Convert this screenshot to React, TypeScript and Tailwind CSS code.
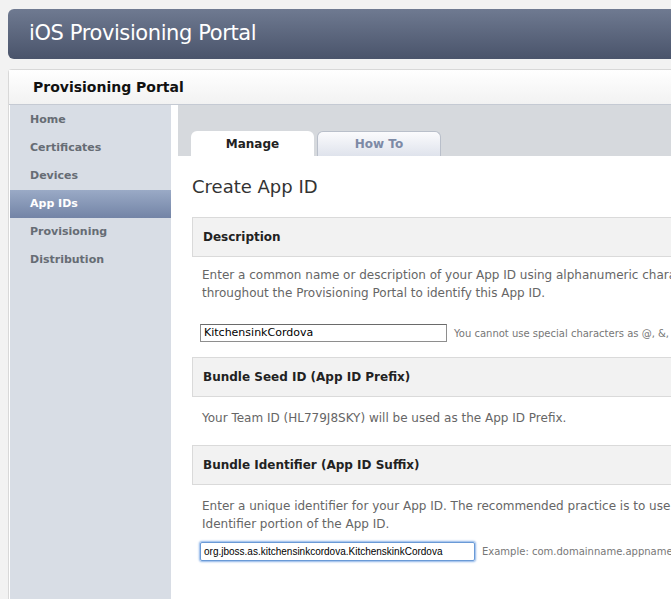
export default function App() {
  const nav = ["Home", "Certificates", "Devices", "App IDs", "Provisioning", "Distribution"];
  return (
    <div className="w-[671px] h-[599px] overflow-hidden bg-[#f2f2f2] pt-[9px] pl-[8px]" style={{ fontFamily: '"DejaVu Sans", "Liberation Sans", sans-serif' }}>
      <div className="h-[50px] rounded-l-[6px] bg-gradient-to-b from-[#6f7a91] to-[#4a546b] flex items-center pl-[21px] text-white text-[21px] tracking-[-0.4px]">
        iOS Provisioning Portal
      </div>
      <div className="mt-[10px] bg-white border-l border-t border-[#d8d8d8] rounded-tl-[4px] h-[540px]">
        <div className="h-[35px] flex items-center pl-[24px] border-b border-[#c5cad3] bg-gradient-to-b from-white to-[#f2f2f2] text-[14px] font-bold text-[#111]">
          Provisioning Portal
        </div>
        <div className="flex">
          <div className="w-[161px] shrink-0 ml-[1px] bg-[#d8dde5] h-[520px] pt-[1px]">
            {nav.map((n) => (
              <div key={n} className={`h-[28px] flex items-center pl-[20px] text-[11px] font-bold ${n === "App IDs" ? "bg-gradient-to-b from-[#9aaac6] to-[#7384a6] text-white" : "text-[#666c74]"}`}>
                {n}
              </div>
            ))}
          </div>
          <div className="flex-1 min-w-0 ml-[7px] overflow-hidden">
            <div className="h-[51px] bg-[#d6d9dd] flex items-end pl-[13px] gap-[3px]">
              <div className="w-[123px] h-[25px] bg-white rounded-t-[6px] flex items-center justify-center text-[12px] font-bold text-[#222]">Manage</div>
              <div className="w-[124px] h-[25px] bg-gradient-to-b from-[#fbfbfd] to-[#dfe3ec] border border-b-0 border-[#b9bfca] rounded-t-[6px] flex items-center justify-center text-[12px] font-bold text-[#7d8aa6]">How To</div>
            </div>
            <div className="pl-[14px]">
              <div className="mt-[19px] text-[18px] text-[#333] leading-[24px]">Create App ID</div>
              <Section title="Description" mt="mt-[18px]" />
              <div className="pl-[10px] pt-[9px] text-[12px] leading-[18px] text-[#666] whitespace-nowrap">
                <div>Enter a common name or description of your App ID using alphanumeric characters. The description will be used</div>
                <div>throughout the Provisioning Portal to identify this App ID.</div>
              </div>
              <div className="flex items-center pl-[8px] mt-[22px] whitespace-nowrap">
                <div className="w-[247px] shrink-0 h-[18px] border border-[#8e8e8e] border-t-[#6a6a6a] text-[11px] pl-[3px] leading-[16px] text-black">KitchensinkCordova</div>
                <span className="ml-[7px] text-[10px] text-[#777]">You cannot use special characters as @, &amp;, *, " in your description.</span>
              </div>
              <Section title="Bundle Seed ID (App ID Prefix)" mt="mt-[15px]" />
              <div className="pl-[10px] pt-[12px] text-[12px] leading-[18px] text-[#666]">Your Team ID (HL779J8SKY) will be used as the App ID Prefix.</div>
              <Section title="Bundle Identifier (App ID Suffix)" mt="mt-[18px]" />
              <div className="pl-[10px] pt-[12px] text-[12px] leading-[18px] text-[#666] whitespace-nowrap">
                <div>Enter a unique identifier for your App ID. The recommended practice is to use a reverse-domain name style string for the Bundle</div>
                <div>Identifier portion of the App ID.</div>
              </div>
              <div className="flex items-center pl-[8px] mt-[9px] whitespace-nowrap">
                <div className="w-[275px] shrink-0 h-[19px] border border-[#6a9ad6] rounded-[2px] shadow-[0_0_2px_1px_#8cb4e8] text-[10px] pl-[3px] leading-[17px] text-black" style={{ fontFamily: '"Liberation Sans", sans-serif' }}>org.jboss.as.kitchensinkcordova.KitchenskinkCordova</div>
                <span className="ml-[7px] text-[10px] text-[#777]">Example: com.domainname.appname</span>
              </div>
            </div>
          </div>
        </div>
      </div>
    </div>
  );
}

function Section({ title, mt }: { title: string; mt: string }) {
  return (
    <div className={`${mt} h-[40px] bg-[#f2f2f2] border-t border-b border-l border-[#dadada] flex items-center pl-[10px] text-[12px] font-bold text-[#222]`}>
      {title}
    </div>
  );
}
